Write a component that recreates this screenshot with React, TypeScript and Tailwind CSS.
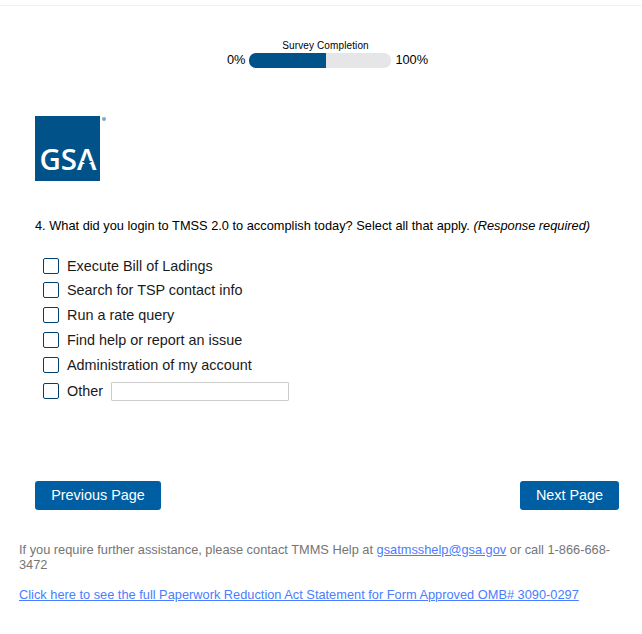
const options = [
  "Execute Bill of Ladings",
  "Search for TSP contact info",
  "Run a rate query",
  "Find help or report an issue",
  "Administration of my account",
];

function Box() {
  return <span className="h-[16px] w-[16px] shrink-0 rounded-[2px] border border-[#00416f] bg-white" />;
}

function GsaLogo() {
  return (
    <div className="flex items-start">
      <svg width="65" height="65" viewBox="0 0 65 65" className="block">
        <rect width="65" height="65" fill="#005288" />
        <text
          x="4.5"
          y="54"
          fontFamily="Open Sans, sans-serif"
          fontSize="28"
          fontWeight="600"
          fill="#fff"
          textLength="57"
          lengthAdjust="spacingAndGlyphs"
        >
          GSA
        </text>
        <polygon points="52,41 53.4,45 57.5,45 54.2,47.5 55.5,51.5 52,49 48.5,51.5 49.8,47.5 46.5,45 50.6,45" fill="#005288" />
      </svg>
      <span className="mt-[1px] ml-[2px] h-[4px] w-[4px] rounded-full bg-[#7fa8c9]" />
    </div>
  );
}

export default function App() {
  return (
    <div className="flex h-[634px] w-[642px] flex-col overflow-hidden bg-white font-['Liberation_Sans',Arial,sans-serif] text-black">
      <div className="mt-[5px] h-px bg-[#f2f2f2]" />
      <div className="mt-[34px] flex flex-col items-center pl-[13px]">
        <div className="mr-[4px] text-[10px] leading-[12px] tracking-[0.12px]">Survey Completion</div>
        <div className="flex items-center gap-[4px] text-[12.8px] leading-[16px]">
          <span>0%</span>
          <div className="h-[15px] w-[142px] overflow-hidden rounded-[7px] bg-[#e6e6e8]">
            <div className="h-full bg-[#005288]" style={{ width: "54%" }} />
          </div>
          <span>100%</span>
        </div>
      </div>

      <div className="mt-[48px] pl-[35px]">
        <GsaLogo />
      </div>

      <p className="mt-[36px] pl-[35px] text-[12.8px] leading-[18px]">
        4. What did you login to TMSS 2.0 to accomplish today? Select all that apply. <em>(Response required)</em>
      </p>

      <ul className="mt-[22.6px] flex flex-col gap-[8.8px] pl-[43px] text-[14.4px] leading-[16px] text-[#1a1a1a]">
        {options.map((o) => (
          <li key={o} className="flex items-center gap-[8px]">
            <Box />
            <span>{o}</span>
          </li>
        ))}
        <li className="flex items-center gap-[8px]">
          <Box />
          <span>Other</span>
          <input className="h-[19px] w-[178px] rounded-[1px] border border-[#ccc] bg-white" />
        </li>
      </ul>

      <div className="mt-[80.4px] flex justify-between pr-[23px] pl-[35px]">
        <button className="h-[29px] w-[126px] rounded-[3px] bg-[#005ea2] text-[14.4px] text-white">Previous Page</button>
        <button className="h-[29px] w-[99px] rounded-[3px] bg-[#005ea2] text-[14.4px] text-white">Next Page</button>
      </div>

      <div className="mt-[32px] px-[19px] text-[12.8px] leading-[15px] text-[#757575]">
        <p>
          If you require further assistance, please contact TMMS Help at{" "}
          <a className="text-[#4a7dff] underline">gsatmsshelp@gsa.gov</a> or call 1-866-668-3472
        </p>
        <p className="mt-[15px]">
          <a className="text-[#4a7dff] underline">
            Click here to see the full Paperwork Reduction Act Statement for Form Approved OMB# 3090-0297
          </a>
        </p>
      </div>
    </div>
  );
}
